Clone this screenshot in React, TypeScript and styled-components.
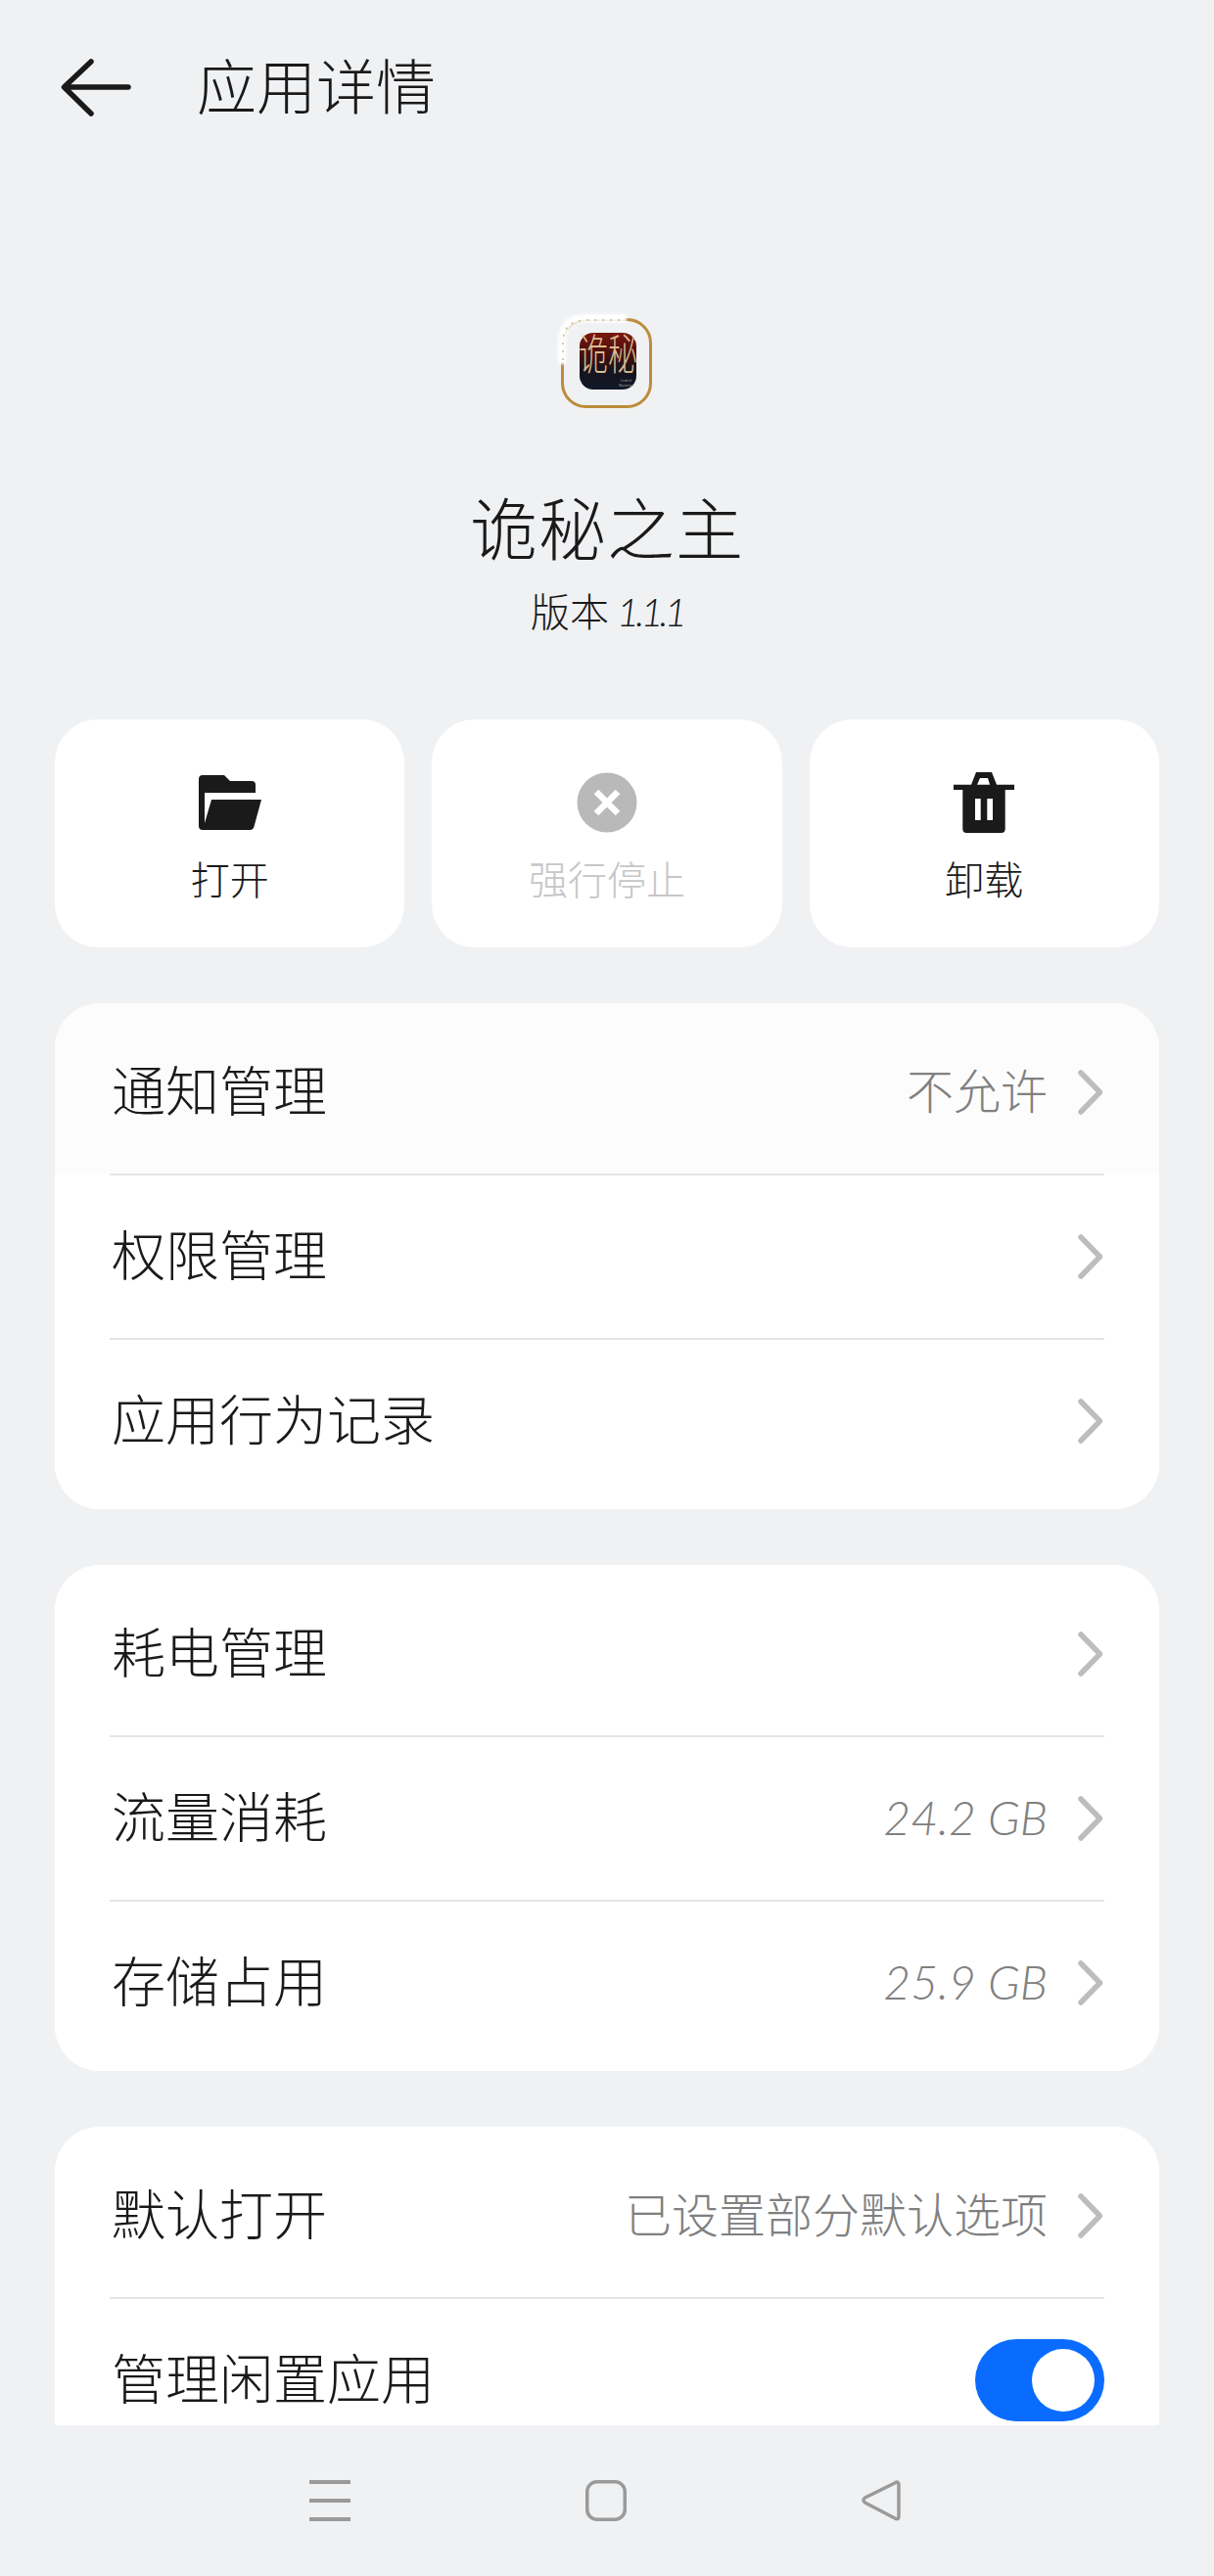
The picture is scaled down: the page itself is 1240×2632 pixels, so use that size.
import { createGlobalStyle, styled } from "styled-components";

const GlobalStyle = createGlobalStyle`
  html, body {
    margin: 0;
    padding: 0;
    background: #f0f1f3;
  }
  body {
    font-family: "Noto Sans CJK SC", "Noto Sans", sans-serif;
    font-weight: 300;
    color: #1a1a1a;
  }
`;

const Page = styled.div`
  width: 1240px;
  height: 2632px;
  display: flex;
  flex-direction: column;
  overflow: hidden;
  background: #f0f1f3;
`;

const Scroller = styled.main`
  height: 2478px;
  overflow: hidden;
  flex: none;
`;

const Header = styled.header`
  height: 178px;
  display: flex;
  align-items: center;
  padding-left: 62px;
  box-sizing: border-box;
`;

const HeaderTitle = styled.h1`
  margin: 0 0 6px 67px;
  font-size: 61px;
  line-height: 80px;
  font-weight: 300;
`;

const Hero = styled.section`
  display: flex;
  flex-direction: column;
  align-items: center;
  padding-top: 132px;
`;

const AppName = styled.h2`
  margin: 67px 0 6px;
  font-size: 69px;
  line-height: 80px;
  font-weight: 300;
  letter-spacing: 1px;
`;

const AppVersion = styled.div`
  margin-top: 15px;
  height: 50px;
  font-size: 40px;
  line-height: 50px;
  margin-bottom: 2px;
`;

const Latin = styled.span`
  font-family: "Lato", "Noto Sans", sans-serif;
  font-style: italic;
  font-weight: 300;
  line-height: 1;
`;

const VersionNumber = styled(Latin)`
  margin-left: 8px;
  letter-spacing: -4px;
`;

const Actions = styled.section`
  display: grid;
  grid-template-columns: repeat(3, 1fr);
  gap: 28px;
  margin: 85px 56px 0;
`;

const ActionCard = styled.button<{ $disabled?: boolean }>`
  height: 233px;
  border: 0;
  padding: 52px 0 0;
  border-radius: 44px;
  background: #fff;
  display: flex;
  flex-direction: column;
  align-items: center;
  font: inherit;
  color: ${(p) => (p.$disabled ? "#c6c6c6" : "#1a1a1a")};
`;

const ActionIcon = styled.div`
  height: 66px;
  display: flex;
  align-items: center;
  justify-content: center;
`;

const ActionLabel = styled.span`
  margin-top: 18px;
  font-size: 40px;
  line-height: 52px;
`;

const Card = styled.section`
  margin: 57px 56px 0;
  border-radius: 46px;
  background: #fff;
  overflow: hidden;
`;

const Row = styled.div<{ $first?: boolean; $last?: boolean; $tinted?: boolean }>`
  height: 166px;
  padding: ${(p) => (p.$first ? "8px" : "0")} 56px ${(p) => (p.$last ? "7px" : "0")} 58px;
  display: flex;
  align-items: center;
  justify-content: space-between;
  background: ${(p) => (p.$tinted ? "#fcfcfc" : "#fff")};
`;

const RowLabel = styled.span`
  font-size: 55px;
  line-height: 70px;
  margin-bottom: 10px;
`;

const RowEnd = styled.div`
  display: flex;
  align-items: center;
`;

const RowValue = styled.span`
  margin: 0 28px 8px 0;
  font-size: 48px;
  line-height: 60px;
  color: #808080;
`;

const Divider = styled.div`
  height: 2px;
  margin: 0 56px;
  background: #e5e5e5;
`;

const Toggle = styled.div`
  width: 132px;
  height: 84px;
  box-sizing: border-box;
  padding: 0 10px;
  border-radius: 42px;
  background: #0a6cff;
  display: flex;
  align-items: center;
  justify-content: flex-end;
`;

const ToggleKnob = styled.div`
  width: 64px;
  height: 64px;
  border-radius: 50%;
  background: #fff;
`;

const NavBar = styled.nav`
  flex: 1;
  display: flex;
  justify-content: center;
  align-items: flex-start;
  gap: 240px;
  padding: 56px 4px 0 0;
`;

const Chevron = () => (
  <svg width="30" height="50" viewBox="0 0 30 50" fill="none">
    <path
      d="M6 5L25.5 25L6 45"
      stroke="#bdbdbd"
      strokeWidth="5.5"
      strokeLinecap="round"
      strokeLinejoin="round"
    />
  </svg>
);

const BackArrow = () => (
  <svg width="72" height="60" viewBox="0 0 72 60" fill="none">
    <path
      d="M69 30H4M31 4L3.5 30L31 57"
      stroke="#1a1a1a"
      strokeWidth="5.5"
      strokeLinecap="round"
      strokeLinejoin="round"
    />
  </svg>
);

const FolderIcon = () => (
  <svg width="64" height="56" viewBox="0 0 64 56">
    <path
      d="M0 4a4 4 0 0 1 4-4H26L32 6H54a4 4 0 0 1 4 4V18H6V49L13 25H64L56.5 52.5a4.5 4.5 0 0 1-4.5 3.5H4a4 4 0 0 1-4-4Z"
      fill="#1a1a1a"
    />
  </svg>
);

const StopIcon = () => (
  <svg width="62" height="62" viewBox="0 0 62 62">
    <circle cx="31" cy="31" r="30.5" fill="#b9b9b9" />
    <path d="M20 20L42 42M42 20L20 42" stroke="#fff" strokeWidth="6.5" />
  </svg>
);

const TrashIcon = () => (
  <svg width="62" height="62" viewBox="0 0 62 62">
    <path
      fillRule="evenodd"
      d="M23 0H39L44 12.7H62V18H52.7V58a4 4 0 0 1-4 4H13.3a4 4 0 0 1-4-4V18H0V12.7H18ZM27 6L24 12.7H37L35 6ZM22 27V49H27.7V27ZM34.3 27V49H40V27Z"
      fill="#1a1a1a"
    />
  </svg>
);

// game launcher icon: gold frame with a dark tile and the title on it
const AppIcon = () => (
  <svg width="120" height="120" viewBox="0 0 120 120">
    <defs>
      <linearGradient id="tile" x1="0" y1="0" x2="0" y2="1">
        <stop offset="0" stopColor="#7a1710" />
        <stop offset="0.35" stopColor="#4a100e" />
        <stop offset="0.65" stopColor="#17141d" />
        <stop offset="1" stopColor="#101828" />
      </linearGradient>
      <filter id="haze" x="-30%" y="-30%" width="160%" height="160%">
        <feGaussianBlur stdDeviation="1.5" />
      </filter>
    </defs>
    <rect x="14.5" y="16.5" width="90" height="89" rx="24" fill="none" stroke="#bb8c3a" strokeWidth="3" />
    <path d="M14 62V40Q14 15 38 15H80" fill="none" stroke="#fff" strokeWidth="8" filter="url(#haze)" />
    <path d="M15 58V40Q15 17 40 17H84" fill="none" stroke="#c9b78f" strokeWidth="1.5" strokeDasharray="2 6" />
    <rect x="32" y="30" width="58" height="58" rx="14" fill="url(#tile)" />
    <text
      x="61"
      y="51"
      textAnchor="middle"
      fontSize="30"
      fill="#dcbd90"
      fontFamily="'Noto Sans CJK SC', sans-serif"
      fontWeight="300"
      transform="translate(0 -6) scale(1 1.45)"
    >
      诡秘
    </text>
    <text x="74" y="80" fontSize="3.5" fill="#a79a88" fontFamily="'Liberation Sans', sans-serif">
      Lord of
    </text>
    <text x="72" y="84.5" fontSize="3.5" fill="#a79a88" fontFamily="'Liberation Sans', sans-serif">
      Mysteries
    </text>
  </svg>
);

const MenuKey = () => (
  <svg width="42" height="42" viewBox="0 0 42 42" fill="#9a9a9a">
    <rect y="0" width="42" height="4" />
    <rect y="19" width="42" height="4" />
    <rect y="38" width="42" height="4" />
  </svg>
);

const HomeKey = () => (
  <svg width="42" height="42" viewBox="0 0 42 42" fill="none">
    <rect x="1.75" y="1.75" width="38.5" height="38.5" rx="10" stroke="#9a9a9a" strokeWidth="3.5" />
  </svg>
);

const BackKey = () => (
  <svg width="40" height="42" viewBox="0 0 40 42" fill="none">
    <path
      d="M38 5Q38 0.5 34 3L3.5 18Q0.5 20.5 3.5 23L34 39Q38 41 38 37Z"
      stroke="#9a9a9a"
      strokeWidth="3.5"
      strokeLinejoin="round"
    />
  </svg>
);

type RowItem = { label: string; value?: string; latin?: boolean };

const Group = ({ items, tintFirst }: { items: RowItem[]; tintFirst?: boolean }) => (
  <Card>
    {items.map((item, i) => (
      <div key={item.label}>
        {i > 0 && <Divider />}
        <Row $first={i === 0} $last={i === items.length - 1} $tinted={tintFirst && i === 0}>
          <RowLabel>{item.label}</RowLabel>
          <RowEnd>
            {item.value && (
              <RowValue>{item.latin ? <Latin>{item.value}</Latin> : item.value}</RowValue>
            )}
            <Chevron />
          </RowEnd>
        </Row>
      </div>
    ))}
  </Card>
);

export default function App() {
  return (
    <Page>
      <GlobalStyle />
      <Scroller>
        <Header>
          <BackArrow />
          <HeaderTitle>应用详情</HeaderTitle>
        </Header>
        <Hero>
          <AppIcon />
          <AppName>诡秘之主</AppName>
          <AppVersion>
            版本<VersionNumber>1.1.1</VersionNumber>
          </AppVersion>
        </Hero>
        <Actions>
          <ActionCard>
            <ActionIcon>
              <FolderIcon />
            </ActionIcon>
            <ActionLabel>打开</ActionLabel>
          </ActionCard>
          <ActionCard $disabled>
            <ActionIcon>
              <StopIcon />
            </ActionIcon>
            <ActionLabel>强行停止</ActionLabel>
          </ActionCard>
          <ActionCard>
            <ActionIcon>
              <TrashIcon />
            </ActionIcon>
            <ActionLabel>卸载</ActionLabel>
          </ActionCard>
        </Actions>
        <Group
          tintFirst
          items={[
            { label: "通知管理", value: "不允许" },
            { label: "权限管理" },
            { label: "应用行为记录" },
          ]}
        />
        <Group
          items={[
            { label: "耗电管理" },
            { label: "流量消耗", value: "24.2 GB", latin: true },
            { label: "存储占用", value: "25.9 GB", latin: true },
          ]}
        />
        <Card>
          <Row $first>
            <RowLabel>默认打开</RowLabel>
            <RowEnd>
              <RowValue>已设置部分默认选项</RowValue>
              <Chevron />
            </RowEnd>
          </Row>
          <Divider />
          <Row>
            <RowLabel>管理闲置应用</RowLabel>
            <Toggle>
              <ToggleKnob />
            </Toggle>
          </Row>
        </Card>
      </Scroller>
      <NavBar>
        <MenuKey />
        <HomeKey />
        <BackKey />
      </NavBar>
    </Page>
  );
}
